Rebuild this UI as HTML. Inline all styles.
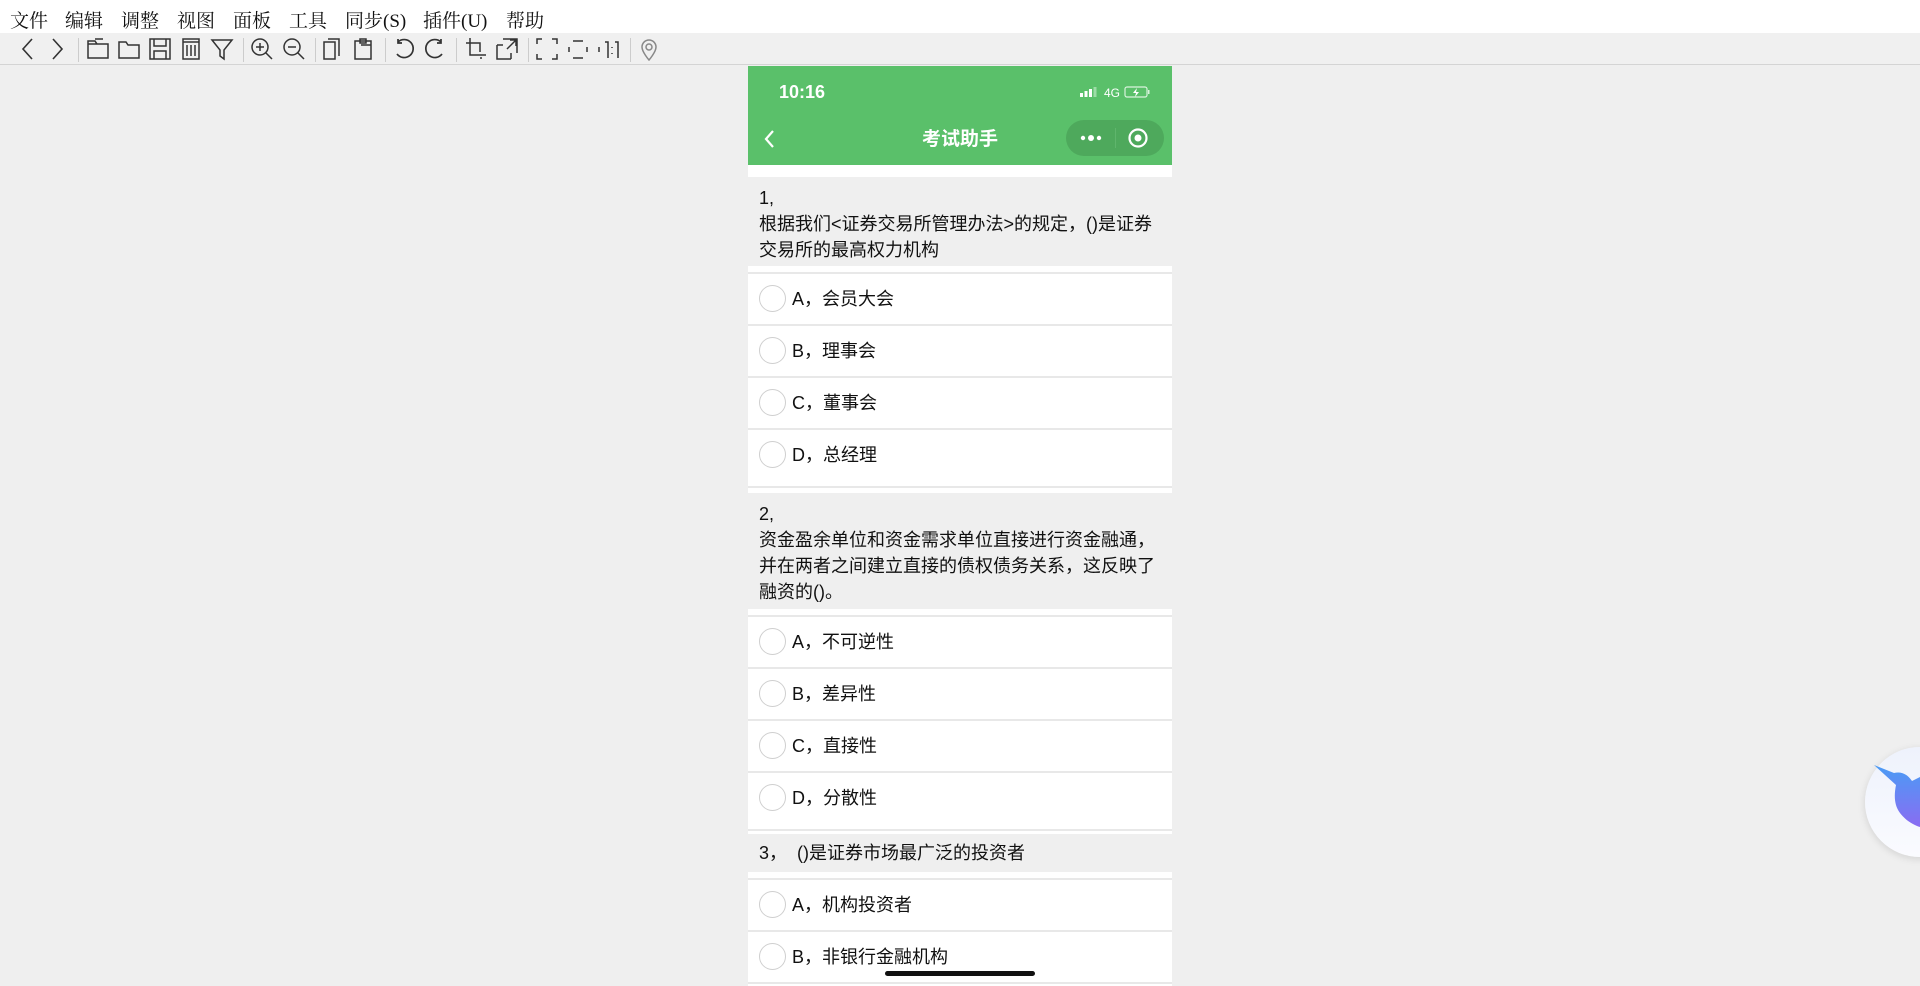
<!DOCTYPE html>
<html><head><meta charset="utf-8"><style>
*{margin:0;padding:0;box-sizing:border-box}
body{width:1920px;height:986px;background:#efefef;font-family:"Liberation Sans","Noto Sans CJK SC",sans-serif;position:relative;overflow:hidden}
.menu{position:absolute;left:0;top:0;width:1920px;height:33px;background:#fff;font-family:"Liberation Serif","Noto Serif CJK SC",serif;font-size:19px;color:#111}
.menu span{position:absolute;top:6px}
.tb{position:absolute;left:0;top:33px;width:1920px;height:32px;background:#f0f0f0;border-bottom:1px solid #d4d4d4}
.tb svg{position:absolute;top:3px}
.sep{position:absolute;top:5px;width:1px;height:24px;background:#ccc}
.ph{position:absolute;left:748px;top:66px;width:424px;height:920px;background:#fff;overflow:hidden}
.green{position:absolute;left:0;top:0;width:424px;height:99px;background:#5ac06a;color:#fff}
.ab{position:absolute}
.q{position:absolute;left:0;width:424px;background:#efefef;font-size:18px;line-height:26px;color:#111;padding:8px 6px 8px 11px}
.op{position:absolute;left:0;width:424px;height:52px;border-top:2px solid #e8e8e8;font-size:18px;color:#111}
.op i{position:absolute;left:11px;top:11px;width:27px;height:27px;border:1.5px solid #cfcfcf;border-radius:50%}
.op span{position:absolute;left:44px;top:11px}
</style></head><body>
<div class="menu">
<span style="left:10px">文件</span><span style="left:65px">编辑</span><span style="left:121px">调整</span><span style="left:177px">视图</span><span style="left:233px">面板</span><span style="left:289px">工具</span><span style="left:345px">同步(S)</span><span style="left:423px">插件(U)</span><span style="left:506px">帮助</span>
</div>
<div class="tb">
<svg style="left:15px" width="26" height="26" viewBox="0 0 26 26" fill="none" stroke="#333" stroke-width="1.6"><path d="M17 3L8 13l9 10"/></svg>
<svg style="left:44px" width="26" height="26" viewBox="0 0 26 26" fill="none" stroke="#333" stroke-width="1.6"><path d="M9 3l9 10-9 10"/></svg>
<div class="sep" style="left:78px"></div>
<svg style="left:85px" width="26" height="26" viewBox="0 0 26 26" fill="none" stroke="#333" stroke-width="1.5"><path d="M3 5h7l2 3h11v14H3zM3 8h20M10 3h8"/></svg>
<svg style="left:116px" width="26" height="26" viewBox="0 0 26 26" fill="none" stroke="#333" stroke-width="1.5"><path d="M3 6h7l2 3h11v13H3z"/></svg>
<svg style="left:147px" width="26" height="26" viewBox="0 0 26 26" fill="none" stroke="#333" stroke-width="1.5"><path d="M3 3h20v20H3zM7 3v7h12V3M7 23v-8h12v8"/></svg>
<svg style="left:178px" width="26" height="26" viewBox="0 0 26 26" fill="none" stroke="#333" stroke-width="1.5"><path d="M5 3h16v20H5zM5 6h16M9 9v11M13 9v11M17 9v11"/></svg>
<svg style="left:209px" width="26" height="26" viewBox="0 0 26 26" fill="none" stroke="#333" stroke-width="1.5"><path d="M3 4h20l-8 10v9l-4-3v-6z"/></svg>
<div class="sep" style="left:243px"></div>
<svg style="left:249px" width="26" height="26" viewBox="0 0 26 26" fill="none" stroke="#333" stroke-width="1.5"><circle cx="11" cy="11" r="8"/><path d="M17 17l6 6M7 11h8M11 7v8"/></svg>
<svg style="left:281px" width="26" height="26" viewBox="0 0 26 26" fill="none" stroke="#333" stroke-width="1.5"><circle cx="11" cy="11" r="8"/><path d="M17 17l6 6M7 11h8"/></svg>
<div class="sep" style="left:315px"></div>
<svg style="left:320px" width="26" height="26" viewBox="0 0 26 26" fill="none" stroke="#333" stroke-width="1.5"><path d="M4 6h11v17H4zM8 3h11v17"/></svg>
<svg style="left:351px" width="26" height="26" viewBox="0 0 26 26" fill="none" stroke="#333" stroke-width="1.5"><path d="M4 5h16v18H4zM9 3h6v4H9zM10 9h10v14"/></svg>
<div class="sep" style="left:385px"></div>
<svg style="left:391px" width="26" height="26" viewBox="0 0 26 26" fill="none" stroke="#333" stroke-width="1.7"><path d="M7 6a9 9 0 1 1-1 12M7 3v4h4"/></svg>
<svg style="left:422px" width="26" height="26" viewBox="0 0 26 26" fill="none" stroke="#333" stroke-width="1.7"><path d="M19 6a9 9 0 1 0 1 12M19 3v4h-4"/></svg>
<div class="sep" style="left:456px"></div>
<svg style="left:463px" width="26" height="26" viewBox="0 0 26 26" fill="none" stroke="#333" stroke-width="1.5"><path d="M7 2v17h16M3 7h14v9M18 21v2"/></svg>
<svg style="left:494px" width="26" height="26" viewBox="0 0 26 26" fill="none" stroke="#333" stroke-width="1.5"><path d="M3 9v14h14M3 9h6M17 23v-6M9 3h14v14M13 13l9-9M16 4h6v6"/></svg>
<div class="sep" style="left:528px"></div>
<svg style="left:534px" width="26" height="26" viewBox="0 0 26 26" fill="none" stroke="#333" stroke-width="1.5"><path d="M3 8V3h5M18 3h5v5M23 18v5h-5M8 23H3v-5"/></svg>
<svg style="left:565px" width="26" height="26" viewBox="0 0 26 26" fill="none" stroke="#333" stroke-width="1.5"><path d="M8 5h10M8 22h10M4 11v5M22 11v5"/></svg>
<svg style="left:596px" width="26" height="26" viewBox="0 0 26 26" fill="none" stroke="#333" stroke-width="1.5"><path d="M3 11v5M9 6h3v16M16 11v1M16 17v1M19 6h3v16"/></svg>
<div class="sep" style="left:630px"></div>
<svg style="left:636px" width="26" height="26" viewBox="0 0 26 26" fill="none" stroke="#888" stroke-width="1.5"><path d="M13 24s-7-8-7-13a7 7 0 0 1 14 0c0 5-7 13-7 13z"/><circle cx="13" cy="11" r="3"/></svg>
</div>

<div class="ph">
<div class="green">
<div class="ab" style="left:31px;top:16px;font-size:18px;font-weight:bold">10:16</div>
<svg class="ab" style="left:332px;top:19px" width="80" height="14" viewBox="0 0 80 14"><rect x="0" y="8" width="3" height="4" fill="#fff"/><rect x="4.5" y="6" width="3" height="6" fill="#fff"/><rect x="9" y="4" width="3" height="8" fill="#fff"/><rect x="13.5" y="2" width="3" height="10" fill="#9ddca7"/><text x="24" y="12" font-size="12" fill="#fff" font-family="Liberation Sans">4G</text><rect x="45" y="2" width="22" height="10" rx="2" fill="none" stroke="#d9f2dd" stroke-width="1.2"/><rect x="68" y="5" width="1.5" height="4" fill="#d9f2dd"/><path d="M57 3l-4 5h3l-1 4 4-5h-3z" fill="#fff"/></svg>
<svg class="ab" style="left:14px;top:62px" width="14" height="22" viewBox="0 0 14 22" fill="none" stroke="#fff" stroke-width="2.2"><path d="M11 3L4 11l7 8"/></svg>
<div class="ab" style="left:0;width:424px;text-align:center;top:58px;font-size:19px;font-weight:bold">考试助手</div>
<div class="ab" style="left:318px;top:54px;width:98px;height:36px;border-radius:18px;background:#4ea95c">
<div class="ab" style="left:49px;top:8px;width:1px;height:20px;background:#5fb56c"></div>
<svg class="ab" style="left:12px;top:10px" width="28" height="16"><circle cx="5" cy="8" r="2.2" fill="#fff"/><circle cx="13" cy="8" r="3" fill="#fff"/><circle cx="21" cy="8" r="2.2" fill="#fff"/></svg>
<svg class="ab" style="left:61px;top:7px" width="22" height="22"><circle cx="11" cy="11" r="8.5" fill="none" stroke="#fff" stroke-width="2.2"/><circle cx="11" cy="11" r="3.5" fill="#fff"/></svg>
</div>
</div>

<div class="q" style="top:111px;height:89px">1,<br>根据我们&lt;证券交易所管理办法&gt;的规定，()是证券交易所的最高权力机构</div>
<div class="op" style="top:206px"><i></i><span>A，会员大会</span></div>
<div class="op" style="top:258px"><i></i><span>B，理事会</span></div>
<div class="op" style="top:310px"><i></i><span>C，董事会</span></div>
<div class="op" style="top:362px"><i></i><span>D，总经理</span></div>
<div class="ab" style="top:420px;left:0;width:424px;height:2px;background:#e8e8e8"></div>

<div class="q" style="top:427px;height:116px">2,<br>资金盈余单位和资金需求单位直接进行资金融通，并在两者之间建立直接的债权债务关系，这反映了融资的()。</div>
<div class="op" style="top:549px"><i></i><span>A，不可逆性</span></div>
<div class="op" style="top:601px"><i></i><span>B，差异性</span></div>
<div class="op" style="top:653px"><i></i><span>C，直接性</span></div>
<div class="op" style="top:705px"><i></i><span>D，分散性</span></div>
<div class="ab" style="top:763px;left:0;width:424px;height:2px;background:#e8e8e8"></div>

<div class="q" style="top:768px;height:38px;padding-top:6px">3，&nbsp;&nbsp;()是证券市场最广泛的投资者</div>
<div class="op" style="top:812px"><i></i><span>A，机构投资者</span></div>
<div class="op" style="top:864px"><i></i><span>B，非银行金融机构</span></div>
<div class="op" style="top:916px"></div>
<div class="ab" style="left:137px;top:905px;width:150px;height:5px;border-radius:3px;background:#111"></div>
</div>

<div class="ab" style="left:1865px;top:747px;width:110px;height:110px;border-radius:50%;background:linear-gradient(#eef2fc,#fafbff);box-shadow:0 2px 8px rgba(0,0,0,.12)"></div>
<svg class="ab" style="left:1870px;top:760px" width="50" height="70" viewBox="0 0 50 70"><defs><linearGradient id="g" x1="0" y1="0" x2="0" y2="1"><stop offset="0" stop-color="#4a9cf5"/><stop offset="1" stop-color="#8a6cf2"/></linearGradient></defs><path d="M4 5l20 8c8-2 14 2 18 8l8-4v50c-6-2-14-6-20-14-6-8-6-18-4-28z" fill="url(#g)"/></svg>
</body></html>
